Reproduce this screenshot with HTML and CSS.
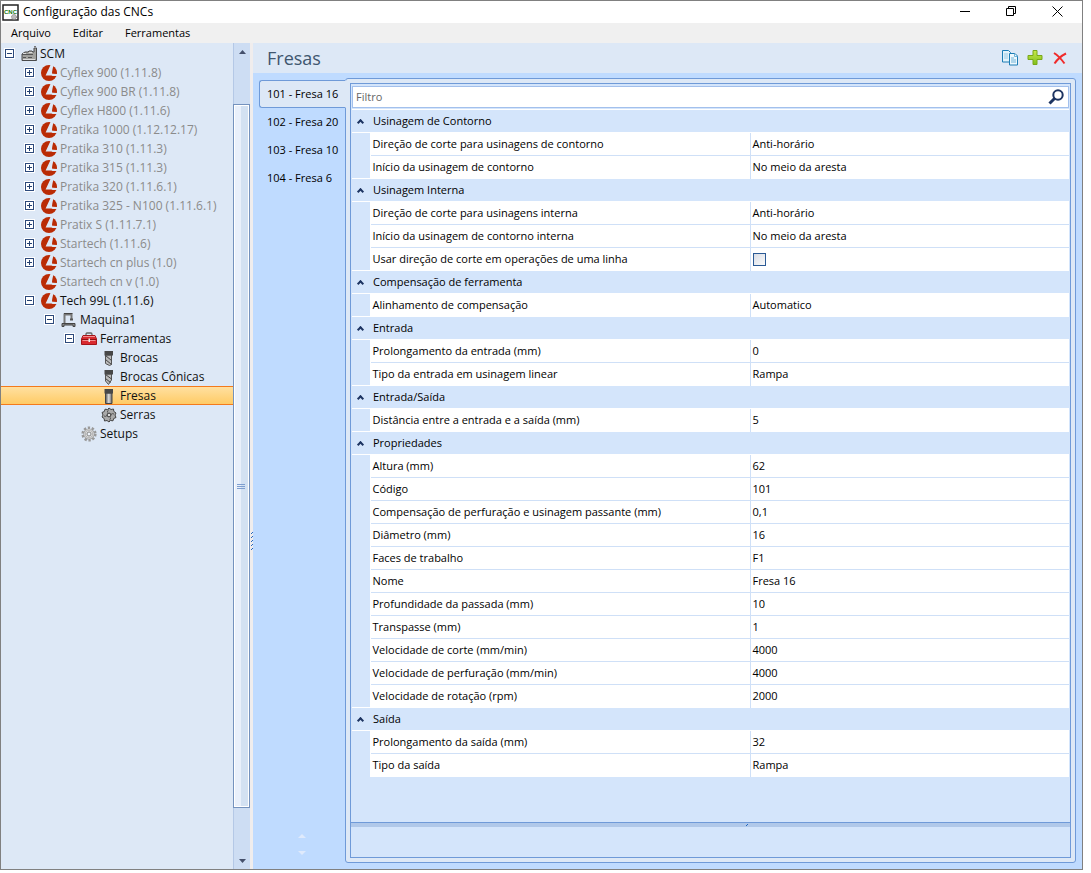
FILE: index.html
```html
<!DOCTYPE html>
<html lang="pt-BR">
<head>
<meta charset="utf-8">
<title>Configuração das CNCs</title>
<link rel="stylesheet" href="styles.css">
</head>
<body>
<svg class="defs" aria-hidden="true">
  <defs>
    <linearGradient id="steel" x1="0" x2="1" y1="0" y2="0"><stop offset="0" stop-color="#555"/><stop offset=".5" stop-color="#ddd"/><stop offset="1" stop-color="#666"/></linearGradient>
    <linearGradient id="leaf" x1="0" x2="0" y1="0" y2="1"><stop offset="0" stop-color="#c9e84a"/><stop offset="1" stop-color="#7fc01c"/></linearGradient>
  </defs>
  <symbol id="factory" viewBox="0 0 16 16"><path d="M1 14.500V8l3-2h3l1-1h3l1 1h1V2h2.500v12.500z" fill="#a2a29e" stroke="#4a4a4a"/><path d="M1 8.500h11M2 11.500h3M7 11.500h4" stroke="#555"/><path d="M2 13.500h12M2 7.500h3M8 6.500h3" stroke="#ddd"/><path d="M13 .5h2" stroke="#777"/></symbol>
  <symbol id="brand" viewBox="0 0 16 16"><circle cx="8" cy="8" r="8" fill="#ba2b05"/><path d="M9.500 0L12.500 0L11.500 4.500 11 8.500 16 9V11H11.500L10.500 10.500H4.600z" fill="#dde8f6"/><path d="M12.600 1.800Q15.500 4.500 15.800 8.600L11.300 8.200z" fill="#ba2b05"/><path d="M9.300 5L10 9H7z" fill="#dde8f6"/></symbol>
  <symbol id="machine" viewBox="0 0 16 16"><path d="M3.500 12V2.500h7V8" fill="none" stroke="#777" stroke-width="2"/><path d="M3 1.500h8.500" stroke="#444"/><path d="M9 6.500h3v2H9z" fill="#555"/><path d="M1 11.500h13v3h-2v-1.500H3v1.500H1z" fill="#888" stroke="#444"/></symbol>
  <symbol id="toolbox" viewBox="0 0 16 16"><path d="M5 5V3.500Q5 2 6 2h4q1 0 1 1.500V5" fill="none" stroke="#666" stroke-width="1.300"/><path d="M.5 13.500V8L2 4.500h12L15.500 8v5.500z" fill="#d92a30" stroke="#a51419"/><path d="M2 5.500h12M1.500 9.500h13" stroke="#f29092"/><path d="M1 8.500h14" stroke="#8d1014"/><path d="M7.500 7.500h1.500v3.500H7.500z" fill="#eee"/></symbol>
  <symbol id="drill" viewBox="0 0 16 16"><path d="M4.500 5h6v9.500l-2 1-4-2z" fill="#bbb" stroke="#555"/><path d="M4.500 5.500l6 5M4.500 9.500l6 5" stroke="#444"/><path d="M3.500 1h8.500v4.500h-8.500z" fill="#484848"/></symbol>
  <symbol id="cone" viewBox="0 0 16 16"><path d="M4.500 5h6v6L7.500 15.500 4.500 12z" fill="#bbb" stroke="#555"/><path d="M4.500 5.500l6 4.500M4.500 9.500l5 4" stroke="#444"/><path d="M3.500 1h8.500v4.500h-8.500z" fill="#484848"/></symbol>
  <symbol id="mill" viewBox="0 0 16 16"><path d="M4.500 5h6.500v10.500H4.500z" fill="url(#steel)" stroke="#444"/><path d="M3.500 1h8.500v4.500H3.500z" fill="#484848"/></symbol>
  <symbol id="saw" viewBox="0 0 16 16"><path d="M8 1l2 1.500 2.500-.5 .3 2.400L15 6l-1 2 1 2.500-2.300 1-.7 2.300-2.500-.3L8 15l-2-1.500-2.500.5-.3-2.400L1 10l1-2-1-2.500 2.300-1 .7-2.300 2.500.3z" fill="#aaa" stroke="#444"/><path d="M8 2.500q-2 1-1.500 3M13 7q-2-1-3 .5M8 13.500q2-1 1.500-3M3 9q2 1 3-.5" fill="none" stroke="#555"/><circle cx="8" cy="8" r="1.900" fill="#ddd" stroke="#333"/></symbol>
  <symbol id="gear" viewBox="0 0 16 16"><circle cx="8" cy="8" r="6.300" fill="none" stroke="#999" stroke-width="2.600" stroke-dasharray="2.300 1.660"/><circle cx="8" cy="8" r="4.400" fill="#ddd" stroke="#999" stroke-width="2.400"/><circle cx="8" cy="8" r="4.300" fill="none" stroke="#ccc" stroke-width="1.500"/><circle cx="8" cy="8" r="2" fill="#eef3fa" stroke="#888"/></symbol>
</svg>

<div class="window">
  <header class="titlebar">
    <svg class="app-icon" width="17" height="17" viewBox="0 0 17 17"><rect x="1" y="1" width="15" height="15" fill="#fff" stroke="#222" stroke-width="1.500"/><circle cx="12" cy="13" r="2.500" fill="#bbb" stroke="#777" stroke-dasharray="1 1"/><text class="app-letters" x="2" y="10">CNC</text></svg>
    <h1>Configuração das CNCs</h1>
    <button class="caption" aria-label="Minimizar"><svg width="11" height="11"><path d="M0 5.500h10" stroke="#000"/></svg></button>
    <button class="caption" aria-label="Restaurar"><svg width="11" height="11"><path d="M.5 2.500h7v7h-7zM2.500 2.500v-2h7v7h-2" fill="none" stroke="#000"/></svg></button>
    <button class="caption" aria-label="Fechar"><svg width="11" height="11"><path d="M.5 .5l10 10M10.500 .5l-10 10" stroke="#000"/></svg></button>
  </header>
  <nav class="menubar"><button>Arquivo</button><button>Editar</button><button>Ferramentas</button></nav>

  <div class="body">
    <aside class="sidebar">
      <ul class="tree">
        <li class="l0 on"><button class="exp minus" aria-label="Recolher"></button><svg class="ico"><use href="#factory"/></svg>SCM</li>
        <li class="l1"><button class="exp plus" aria-label="Expandir"></button><svg class="ico"><use href="#brand"/></svg>Cyflex 900 (1.11.8)</li>
        <li class="l1"><button class="exp plus" aria-label="Expandir"></button><svg class="ico"><use href="#brand"/></svg>Cyflex 900 BR (1.11.8)</li>
        <li class="l1"><button class="exp plus" aria-label="Expandir"></button><svg class="ico"><use href="#brand"/></svg>Cyflex H800 (1.11.6)</li>
        <li class="l1"><button class="exp plus" aria-label="Expandir"></button><svg class="ico"><use href="#brand"/></svg>Pratika 1000 (1.12.12.17)</li>
        <li class="l1"><button class="exp plus" aria-label="Expandir"></button><svg class="ico"><use href="#brand"/></svg>Pratika 310 (1.11.3)</li>
        <li class="l1"><button class="exp plus" aria-label="Expandir"></button><svg class="ico"><use href="#brand"/></svg>Pratika 315 (1.11.3)</li>
        <li class="l1"><button class="exp plus" aria-label="Expandir"></button><svg class="ico"><use href="#brand"/></svg>Pratika 320 (1.11.6.1)</li>
        <li class="l1"><button class="exp plus" aria-label="Expandir"></button><svg class="ico"><use href="#brand"/></svg>Pratika 325 - N100 (1.11.6.1)</li>
        <li class="l1"><button class="exp plus" aria-label="Expandir"></button><svg class="ico"><use href="#brand"/></svg>Pratix S (1.11.7.1)</li>
        <li class="l1"><button class="exp plus" aria-label="Expandir"></button><svg class="ico"><use href="#brand"/></svg>Startech (1.11.6)</li>
        <li class="l1"><button class="exp plus" aria-label="Expandir"></button><svg class="ico"><use href="#brand"/></svg>Startech cn plus (1.0)</li>
        <li class="l1"><span class="noexp"></span><svg class="ico"><use href="#brand"/></svg>Startech cn v (1.0)</li>
        <li class="l1 on"><button class="exp minus" aria-label="Recolher"></button><svg class="ico"><use href="#brand"/></svg>Tech 99L (1.11.6)</li>
        <li class="l2 on"><button class="exp minus" aria-label="Recolher"></button><svg class="ico"><use href="#machine"/></svg>Maquina1</li>
        <li class="l3 on"><button class="exp minus" aria-label="Recolher"></button><svg class="ico"><use href="#toolbox"/></svg>Ferramentas</li>
        <li class="l4 on"><span class="noexp"></span><svg class="ico"><use href="#drill"/></svg>Brocas</li>
        <li class="l4 on"><span class="noexp"></span><svg class="ico"><use href="#cone"/></svg>Brocas Cônicas</li>
        <li class="l4 on selected"><span class="noexp"></span><svg class="ico"><use href="#mill"/></svg>Fresas</li>
        <li class="l4 on"><span class="noexp"></span><svg class="ico"><use href="#saw"/></svg>Serras</li>
        <li class="l3 on"><span class="noexp"></span><svg class="ico"><use href="#gear"/></svg>Setups</li>
      </ul>
      <div class="scrollbar">
        <button class="arrow" aria-label="Rolar para cima"><svg width="7" height="4"><path d="M0 4L3.500 0 7 4z" fill="#45506b"/></svg></button>
        <div class="track"><div class="thumb"><svg width="8" height="6"><path d="M0 .5h8M0 2.500h8M0 4.500h8" stroke="#7f9fd0"/></svg></div></div>
        <button class="arrow" aria-label="Rolar para baixo"><svg width="7" height="4"><path d="M0 0L3.500 4 7 0z" fill="#45506b"/></svg></button>
      </div>
    </aside>
    <div class="splitter"><svg width="3" height="20"><path d="M2 2.500h1M1 3.500h1M2 6.500h1M1 7.500h1M2 10.500h1M1 11.500h1M2 14.500h1M1 15.500h1M2 18.500h1M1 19.500h1" stroke="#2468c0"/></svg></div>

    <main class="main">
      <div class="main-head">
        <h2>Fresas</h2>
        <button class="tool" aria-label="Copiar"><svg width="16" height="16" viewBox="0 0 16 16"><path d="M.5 .5h6l2 2v9.500h-8z" fill="#e3f3fb" stroke="#1d7db5"/><path d="M2 4h4M2 6h4M2 8h4" stroke="#9ccbe4"/><path d="M7.500 3.500h5.500l2.500 2.500v9h-8z" fill="#eef8fd" stroke="#1d7db5"/><path d="M12.500 3.500v3h3M9 8h3M9 10h5M9 12h5" fill="none" stroke="#6eb2d7"/></svg></button>
        <button class="tool" aria-label="Adicionar"><svg width="16" height="16" viewBox="0 0 16 16"><path d="M6 .5h4v5h5v4h-5v5h-4v-5h-5v-4h5z" fill="url(#leaf)" stroke="#78a818"/></svg></button>
        <button class="tool" aria-label="Excluir"><svg width="16" height="16" viewBox="0 0 16 16"><path d="M2 3Q7 6 12.500 13.500M14 3.500Q7 7 2.500 13.500" fill="none" stroke="#f02b2b" stroke-width="2"/></svg></button>
      </div>
      <div class="content">
        <div class="tabs">
          <div role="tablist">
            <button class="tab active" role="tab" aria-selected="true">101 - Fresa 16</button>
            <button class="tab" role="tab">102 - Fresa 20</button>
            <button class="tab" role="tab">103 - Fresa 10</button>
            <button class="tab" role="tab">104 - Fresa 6</button>
          </div>
          <div class="tab-scroll">
            <button aria-label="Anterior"><svg width="8" height="4"><path d="M0 4L4 0 8 4z" fill="#dfeafc"/></svg></button>
            <button aria-label="Próxima"><svg width="8" height="4"><path d="M0 0L4 4 8 0z" fill="#dfeafc"/></svg></button>
          </div>
        </div>
        <section class="panel">
          <div class="inner">
            <div class="grid-area">
              <div class="filter">
                <input type="text" placeholder="Filtro" aria-label="Filtro">
                <button aria-label="Pesquisar"><svg width="16" height="16" viewBox="0 0 16 16"><circle cx="10" cy="6" r="4.700" fill="none" stroke="#1d3461" stroke-width="2"/><path d="M6.500 9.500L1.500 14.500" stroke="#1d3461" stroke-width="3"/></svg></button>
              </div>
              <table class="props">
                <colgroup><col class="c-gutter"><col class="c-name"><col></colgroup>
                <tbody>
                <tr class="group"><td><button class="chev" aria-label="Recolher"></button></td><th colspan="2">Usinagem de Contorno</th></tr>
                <tr><td></td><th>Direção de corte para usinagens de contorno</th><td>Anti-horário</td></tr>
                <tr><td></td><th>Início da usinagem de contorno</th><td>No meio da aresta</td></tr>
                <tr class="group"><td><button class="chev" aria-label="Recolher"></button></td><th colspan="2">Usinagem Interna</th></tr>
                <tr><td></td><th>Direção de corte para usinagens interna</th><td>Anti-horário</td></tr>
                <tr><td></td><th>Início da usinagem de contorno interna</th><td>No meio da aresta</td></tr>
                <tr><td></td><th><label for="one-line">Usar direção de corte em operações de uma linha</label></th><td><input type="checkbox" id="one-line"></td></tr>
                <tr class="group"><td><button class="chev" aria-label="Recolher"></button></td><th colspan="2">Compensação de ferramenta</th></tr>
                <tr><td></td><th>Alinhamento de compensação</th><td>Automatico</td></tr>
                <tr class="group"><td><button class="chev" aria-label="Recolher"></button></td><th colspan="2">Entrada</th></tr>
                <tr><td></td><th>Prolongamento da entrada (mm)</th><td>0</td></tr>
                <tr><td></td><th>Tipo da entrada em usinagem linear</th><td>Rampa</td></tr>
                <tr class="group"><td><button class="chev" aria-label="Recolher"></button></td><th colspan="2">Entrada/Saída</th></tr>
                <tr><td></td><th>Distância entre a entrada e a saída (mm)</th><td>5</td></tr>
                <tr class="group"><td><button class="chev" aria-label="Recolher"></button></td><th colspan="2">Propriedades</th></tr>
                <tr><td></td><th>Altura (mm)</th><td>62</td></tr>
                <tr><td></td><th>Código</th><td>101</td></tr>
                <tr><td></td><th>Compensação de perfuração e usinagem passante (mm)</th><td>0,1</td></tr>
                <tr><td></td><th>Diâmetro (mm)</th><td>16</td></tr>
                <tr><td></td><th>Faces de trabalho</th><td>F1</td></tr>
                <tr><td></td><th>Nome</th><td>Fresa 16</td></tr>
                <tr><td></td><th>Profundidade da passada (mm)</th><td>10</td></tr>
                <tr><td></td><th>Transpasse (mm)</th><td>1</td></tr>
                <tr><td></td><th>Velocidade de corte (mm/min)</th><td>4000</td></tr>
                <tr><td></td><th>Velocidade de perfuração (mm/min)</th><td>4000</td></tr>
                <tr><td></td><th>Velocidade de rotação (rpm)</th><td>2000</td></tr>
                <tr class="group"><td><button class="chev" aria-label="Recolher"></button></td><th colspan="2">Saída</th></tr>
                <tr><td></td><th>Prolongamento da saída (mm)</th><td>32</td></tr>
                <tr><td></td><th>Tipo da saída</th><td>Rampa</td></tr>
                </tbody>
              </table>
            </div>
            <div class="hsplit"><svg width="75" height="3"><path d="M74 .5h1M73 1.500h1" stroke="#2468c0"/></svg></div>
            <div class="desc"></div>
          </div>
        </section>
      </div>
    </main>
  </div>
</div>
</body>
</html>
```

FILE: styles.css
```css
* { box-sizing: border-box; }
body {
  margin: 0;
  padding: 0 8px 3px 0;
  height: 100vh;
  background: #fff;
  color: #000;
  font: 11px/16px "Open Sans", "Noto Sans", sans-serif;
}
button {
  margin: 0;
  padding: 0;
  border: 0;
  background: none;
  color: inherit;
  font: inherit;
}
svg { display: block; flex: none; }
h1, h2, ul { margin: 0; padding: 0; font-weight: 400; }
.defs { position: absolute; width: 0; height: 0; }

.window {
  display: flex;
  flex-direction: column;
  height: 100%;
  border: 1px solid #808080;
}

.titlebar { display: flex; align-items: center; height: 22px; padding-left: 1px; }
.titlebar h1 { flex: 1; padding-left: 4px; font-size: 12px; }
.app-letters { fill: #157a15; font: bold 6px "Liberation Sans", sans-serif; }
.caption { display: flex; justify-content: center; align-items: center; width: 46px; height: 20px; padding-bottom: 2px; }
.caption:last-child { margin-right: 2px; }

.menubar { display: flex; gap: 22px; height: 20px; padding: 0 10px; background: #f0f0f0; }

.body { flex: 1; display: flex; min-height: 0; }

.sidebar { display: flex; width: 249px; background: #dde8f6; }
.tree { flex: 1; padding-top: 1px; list-style: none; font-size: 12px; color: #8b8b8b; }
.tree li { display: flex; align-items: center; gap: 3px; height: 19px; white-space: nowrap; }
.tree .on { color: #111; }
.tree .l0 { padding-left: 4px; }
.tree .l1 { padding-left: 24px; }
.tree .l2 { padding-left: 44px; }
.tree .l3 { padding-left: 64px; }
.tree .l4 { padding-left: 84px; }
.tree .selected {
  border: solid #f47a1c;
  border-width: 1px 0;
  background: linear-gradient(#ffe0a0, #ffcb66);
}
.ico { width: 16px; height: 16px; }
.noexp, .exp { flex: none; width: 9px; height: 9px; margin-right: 4px; }
.exp { border: 1px solid #2d4a7c; outline: 1px solid #fff; background: #fff; }
.minus { background: linear-gradient(#24406f, #24406f) center / 5px 1px no-repeat #fff; }
.plus {
  background:
    linear-gradient(#24406f, #24406f) center / 5px 1px no-repeat,
    linear-gradient(#24406f, #24406f) center / 1px 5px no-repeat #fff;
}

.scrollbar { display: flex; flex-direction: column; width: 17px; border-left: 1px solid #b4c8e6; background: #cdddf3; }
.arrow { display: flex; justify-content: center; align-items: center; height: 17px; }
.track { flex: 1; padding: 44px 0; }
.thumb {
  display: flex;
  justify-content: center;
  align-items: center;
  height: 100%;
  min-height: 24px;
  margin-left: -1px;
  padding: 62px 1px 0 0;
  border: 1px solid #7492be;
  box-shadow: inset 0 0 0 1px #fff;
  background: linear-gradient(90deg, #e9f0fb 45%, #d3e1f2 45%);
}
.splitter { display: flex; align-items: center; width: 3px; padding-top: 168px; background: #f0eded; }

.main { flex: 1; display: flex; flex-direction: column; min-width: 0; background: #bfdbff; }
.main-head { display: flex; align-items: center; gap: 9px; height: 30px; padding: 0 14px; background: #dde8f6; }
.main-head h2 { flex: 1; color: #40566f; font-size: 18px; line-height: 24px; }

.content { flex: 1; display: flex; min-height: 0; padding: 5px 6px 6px; }
.tabs { position: relative; z-index: 1; display: flex; flex-direction: column; justify-content: space-between; width: 86px; padding-top: 2px; }
.tab {
  display: block;
  width: 100%;
  height: 28px;
  padding-left: 7px;
  border: 1px solid transparent;
  text-align: left;
  white-space: nowrap;
}
.tab.active {
  width: 87px;
  border-color: #6f9ad8;
  border-right-color: #dde8f6;
  border-radius: 3px 0 0 3px;
  background: #dde8f6;
}
.tab-scroll { display: flex; flex-direction: column; align-items: center; gap: 13px; padding-bottom: 8px; }
.panel { flex: 1; display: flex; min-width: 0; padding: 4px; border: 1px solid #6f9ad8; border-radius: 3px; background: #dde8f6; }
.inner { flex: 1; display: flex; flex-direction: column; min-width: 0; border: 1px solid #6f9ad8; background: #d4e5fb; }
.grid-area { flex: 1; min-height: 0; padding: 2px 1px 0; overflow: hidden; }
.filter { display: flex; align-items: center; height: 22px; margin-bottom: 1px; padding-right: 4px; border: 1px solid #a3c0ec; background: #fff; }
.filter input { flex: 1; min-width: 0; padding: 0 4px 0 3px; border: 0; outline: 0; background: none; font: inherit; }
.filter input::placeholder { color: #666; opacity: 1; }

.props { width: 100%; border-collapse: collapse; table-layout: fixed; }
.c-gutter { width: 18px; }
.c-name { width: 380px; }
.props tr { height: 23px; background: #fff; }
.props th, .props td {
  padding: 0 2px;
  border-top: 1px solid #cfe0f7;
  border-left: 1px solid #cfe0f7;
  overflow: hidden;
  font-weight: 400;
  text-align: left;
  white-space: nowrap;
}
.props tr > td:first-child { padding: 0; border: 0; border-right: 1px solid #fff; background: #d4e5fb; }
.props .group { background: #d4e5fb; }
.props .group > td:first-child, .props .group th { border: 0; border-top: 1px solid #fff; border-bottom: 1px solid #fff; }
.props .group th { padding-left: 3px; }
.chev { display: block; width: 5px; height: 5px; margin: 3px 0 0 6px; border: solid #1d3461; border-width: 2px 0 0 2px; transform: rotate(45deg); }
.props input { display: block; appearance: none; width: 13px; height: 13px; margin: 0; border: 1px solid #2b5a95; background: linear-gradient(135deg, #d9dde6, #fafafa); }

.hsplit { display: flex; justify-content: center; align-items: center; height: 5px; border-top: 1px solid #6f9ad8; background: #b0c8e9; }
.desc { height: 30px; }
```
